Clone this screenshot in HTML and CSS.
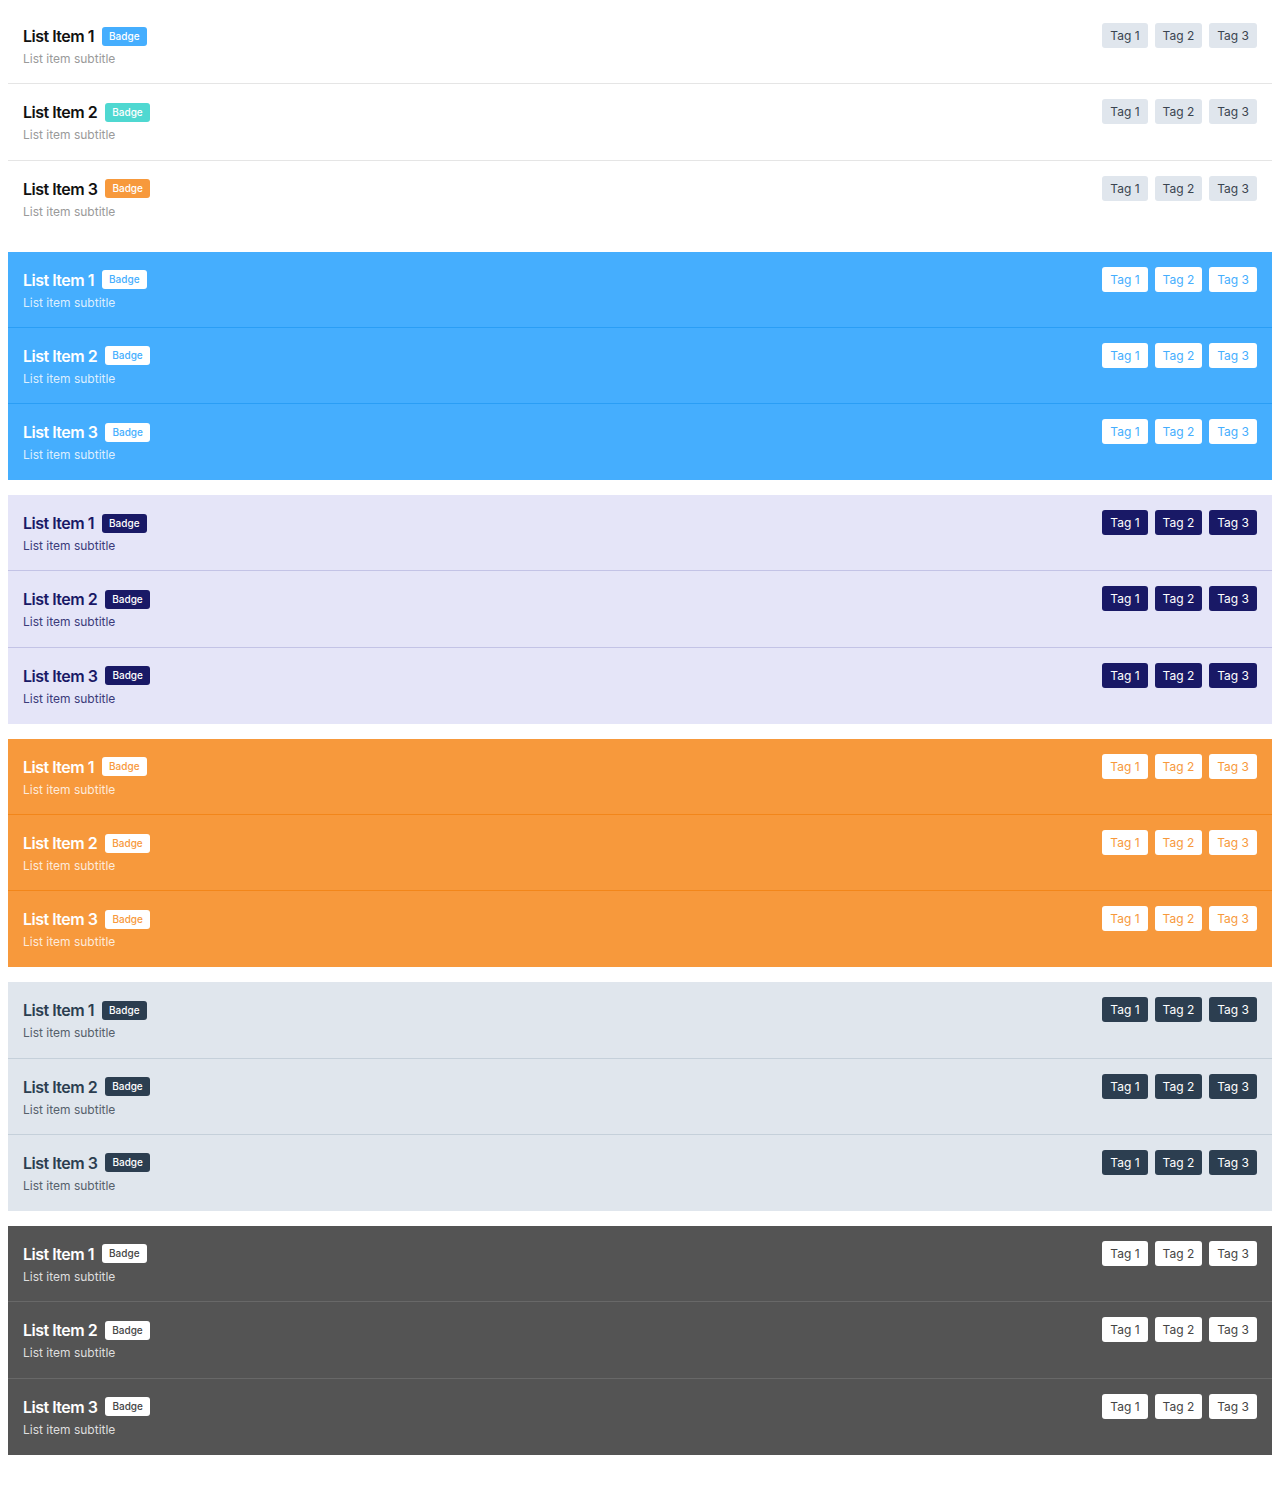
FILE: index.html
```html
<!DOCTYPE html>
<html>
<head>
<meta charset="utf-8">
<link rel="stylesheet" href="styles.css">
</head>
<body>
<ul class="list theme-default">
  <li class="item"><div class="main"><div class="head"><span class="title">List Item 1</span><span class="badge badge-blue">Badge</span></div><div class="sub">List item subtitle</div></div><div class="tags"><span class="tag">Tag 1</span><span class="tag">Tag 2</span><span class="tag">Tag 3</span></div></li>
  <li class="item"><div class="main"><div class="head"><span class="title">List Item 2</span><span class="badge badge-teal">Badge</span></div><div class="sub">List item subtitle</div></div><div class="tags"><span class="tag">Tag 1</span><span class="tag">Tag 2</span><span class="tag">Tag 3</span></div></li>
  <li class="item"><div class="main"><div class="head"><span class="title">List Item 3</span><span class="badge badge-orange">Badge</span></div><div class="sub">List item subtitle</div></div><div class="tags"><span class="tag">Tag 1</span><span class="tag">Tag 2</span><span class="tag">Tag 3</span></div></li>
</ul>
<ul class="list theme-blue">
  <li class="item"><div class="main"><div class="head"><span class="title">List Item 1</span><span class="badge">Badge</span></div><div class="sub">List item subtitle</div></div><div class="tags"><span class="tag">Tag 1</span><span class="tag">Tag 2</span><span class="tag">Tag 3</span></div></li>
  <li class="item"><div class="main"><div class="head"><span class="title">List Item 2</span><span class="badge">Badge</span></div><div class="sub">List item subtitle</div></div><div class="tags"><span class="tag">Tag 1</span><span class="tag">Tag 2</span><span class="tag">Tag 3</span></div></li>
  <li class="item"><div class="main"><div class="head"><span class="title">List Item 3</span><span class="badge">Badge</span></div><div class="sub">List item subtitle</div></div><div class="tags"><span class="tag">Tag 1</span><span class="tag">Tag 2</span><span class="tag">Tag 3</span></div></li>
</ul>
<ul class="list theme-lavender">
  <li class="item"><div class="main"><div class="head"><span class="title">List Item 1</span><span class="badge">Badge</span></div><div class="sub">List item subtitle</div></div><div class="tags"><span class="tag">Tag 1</span><span class="tag">Tag 2</span><span class="tag">Tag 3</span></div></li>
  <li class="item"><div class="main"><div class="head"><span class="title">List Item 2</span><span class="badge">Badge</span></div><div class="sub">List item subtitle</div></div><div class="tags"><span class="tag">Tag 1</span><span class="tag">Tag 2</span><span class="tag">Tag 3</span></div></li>
  <li class="item"><div class="main"><div class="head"><span class="title">List Item 3</span><span class="badge">Badge</span></div><div class="sub">List item subtitle</div></div><div class="tags"><span class="tag">Tag 1</span><span class="tag">Tag 2</span><span class="tag">Tag 3</span></div></li>
</ul>
<ul class="list theme-orange">
  <li class="item"><div class="main"><div class="head"><span class="title">List Item 1</span><span class="badge">Badge</span></div><div class="sub">List item subtitle</div></div><div class="tags"><span class="tag">Tag 1</span><span class="tag">Tag 2</span><span class="tag">Tag 3</span></div></li>
  <li class="item"><div class="main"><div class="head"><span class="title">List Item 2</span><span class="badge">Badge</span></div><div class="sub">List item subtitle</div></div><div class="tags"><span class="tag">Tag 1</span><span class="tag">Tag 2</span><span class="tag">Tag 3</span></div></li>
  <li class="item"><div class="main"><div class="head"><span class="title">List Item 3</span><span class="badge">Badge</span></div><div class="sub">List item subtitle</div></div><div class="tags"><span class="tag">Tag 1</span><span class="tag">Tag 2</span><span class="tag">Tag 3</span></div></li>
</ul>
<ul class="list theme-slate">
  <li class="item"><div class="main"><div class="head"><span class="title">List Item 1</span><span class="badge">Badge</span></div><div class="sub">List item subtitle</div></div><div class="tags"><span class="tag">Tag 1</span><span class="tag">Tag 2</span><span class="tag">Tag 3</span></div></li>
  <li class="item"><div class="main"><div class="head"><span class="title">List Item 2</span><span class="badge">Badge</span></div><div class="sub">List item subtitle</div></div><div class="tags"><span class="tag">Tag 1</span><span class="tag">Tag 2</span><span class="tag">Tag 3</span></div></li>
  <li class="item"><div class="main"><div class="head"><span class="title">List Item 3</span><span class="badge">Badge</span></div><div class="sub">List item subtitle</div></div><div class="tags"><span class="tag">Tag 1</span><span class="tag">Tag 2</span><span class="tag">Tag 3</span></div></li>
</ul>
<ul class="list theme-dark">
  <li class="item"><div class="main"><div class="head"><span class="title">List Item 1</span><span class="badge">Badge</span></div><div class="sub">List item subtitle</div></div><div class="tags"><span class="tag">Tag 1</span><span class="tag">Tag 2</span><span class="tag">Tag 3</span></div></li>
  <li class="item"><div class="main"><div class="head"><span class="title">List Item 2</span><span class="badge">Badge</span></div><div class="sub">List item subtitle</div></div><div class="tags"><span class="tag">Tag 1</span><span class="tag">Tag 2</span><span class="tag">Tag 3</span></div></li>
  <li class="item"><div class="main"><div class="head"><span class="title">List Item 3</span><span class="badge">Badge</span></div><div class="sub">List item subtitle</div></div><div class="tags"><span class="tag">Tag 1</span><span class="tag">Tag 2</span><span class="tag">Tag 3</span></div></li>
</ul>
</body>
</html>
```
FILE: styles.css
```css
body {
  margin: 8px;
  font-family: Inter, "Noto Sans", sans-serif;
  background: #fff;
}
.list {
  list-style: none;
  margin: 0 0 15px 0;
  padding: 0;
}
.item {
  display: flex;
  justify-content: space-between;
  align-items: flex-start;
  padding: 15px;
  height: 76.3px;
  box-sizing: border-box;
  border-bottom: 1px solid #e5e5e5;
}
.item:last-child {
  border-bottom: none;
  height: 76px;
}
.head {
  display: flex;
  align-items: center;
  gap: 8px;
  height: 26px;
}
.title {
  font-size: 16px;
  font-weight: 600;
  letter-spacing: -0.5px;
  line-height: 26px;
  color: #111;
}
.badge {
  font-size: 10px;
  font-weight: 500;
  line-height: 19px;
  height: 19px;
  padding: 0 7px;
  border-radius: 3px;
  color: #fff;
}
.sub {
  font-size: 12px;
  line-height: 20px;
  color: #9a9a9a;
}
.tags {
  display: flex;
  gap: 7px;
}
.tag {
  font-size: 12px;
  line-height: 25px;
  height: 25px;
  padding: 0 8px;
  border-radius: 3px;
  background: #e0e6ed;
  color: #3a4450;
}

.badge-blue { background: #45aefe; }
.badge-teal { background: #4fd8d1; }
.badge-orange { background: #f7993c; }

/* blue */
.theme-blue .item { background: #45aefe; border-color: #2a9ef5; }
.theme-blue .title { color: #fff; }
.theme-blue .sub { color: rgba(255,255,255,0.82); }
.theme-blue .badge, .theme-blue .tag { background: #fff; color: #45aefe; }

/* lavender */
.theme-lavender .item { background: #e5e5f8; border-color: #c3c3e6; }
.theme-lavender .title { color: #191966; }
.theme-lavender .sub { color: #3b3b7a; }
.theme-lavender .badge, .theme-lavender .tag { background: #191966; color: #fff; }

/* orange */
.theme-orange .item { background: #f7993c; border-color: #f2861a; }
.theme-orange .title { color: #fff; }
.theme-orange .sub { color: rgba(255,255,255,0.82); }
.theme-orange .badge, .theme-orange .tag { background: #fff; color: #f7993c; }

/* slate */
.theme-slate .item { background: #e0e6ed; border-color: #c5d0da; }
.theme-slate .title { color: #2c3e50; }
.theme-slate .sub { color: #56606b; }
.theme-slate .badge, .theme-slate .tag { background: #2c3e50; color: #fff; }

/* dark */
.theme-dark .item { background: #545454; border-color: #686868; }
.theme-dark .title { color: #fff; }
.theme-dark .sub { color: #dedede; }
.theme-dark .badge, .theme-dark .tag { background: #fff; color: #444; }
```
